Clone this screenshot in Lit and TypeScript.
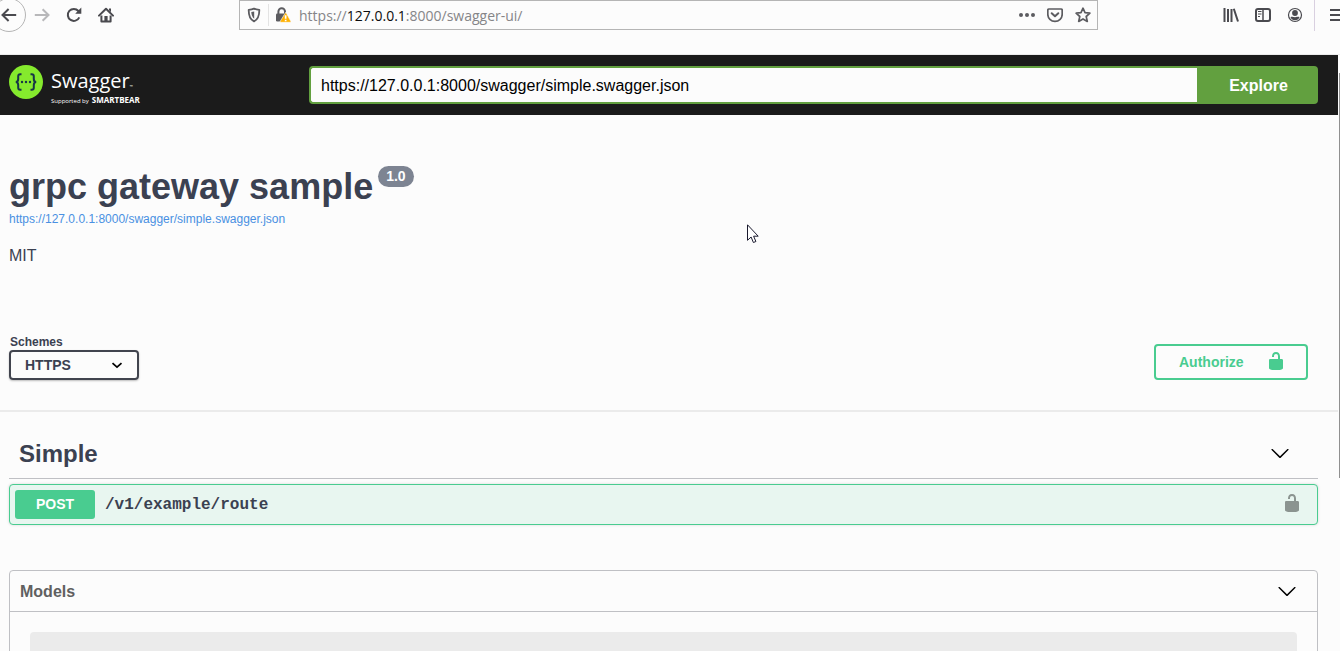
import { LitElement, html, css, svg } from "lit";
import { customElement, state } from "lit/decorators.js";

const chevron = html`<svg class="chevron" viewBox="0 0 20 20" width="20" height="20" aria-hidden="true">
  <path d="M17.418 5.109c.272-.268.709-.268.979 0s.271.701 0 .969l-7.908 7.830c-.27.268-.707.268-.979 0l-7.908-7.830c-.27-.268-.27-.701 0-.969.271-.268.709-.268.979 0L10 12.250l7.418-7.141z" />
</svg>`;

const unlocked = html`<svg class="lock" viewBox="0 0 20 20" width="20" height="20" aria-hidden="true">
  <path d="M15.8 8H14V5.6C14 2.703 12.665 1 10 1 7.334 1 6 2.703 6 5.6V6h2v-.801C8 3.754 8.797 3 10 3c1.203 0 2 .754 2 2.199V8H4c-.553 0-1 .646-1 1.199V17c0 .549.428 1.139.951 1.307l1.197.387C5.672 18.861 6.55 19 7.1 19h5.8c.549 0 1.428-.139 1.951-.307l1.196-.387c.524-.167.953-.757.953-1.306V9.199C17 8.646 16.352 8 15.8 8z" />
</svg>`;

const icon = (body: unknown) =>
  html`<svg viewBox="0 0 16 16" width="16" height="16" aria-hidden="true">${body}</svg>`;

const icons = {
  back: svg`<path d="M15.2 8H1.6M7.6 2L1.5 8l6.1 6" class="line" />`,
  forward: svg`<path d="M.8 8h13.6M8.6 2.2L14.5 8l-5.9 5.8" class="line" />`,
  reload: svg`<path d="M13.3 10.4a6 6 0 1 1-.9-6.4l1 1.4" class="line" /><path d="M15.3.6v6.2H9.2z" />`,
  home: svg`<path d="M1 8.6L8 1.8l7 6.8" class="line" stroke-linecap="round" stroke-linejoin="round" /><path d="M3.4 8.4v6h9.2v-6" class="line" stroke-linejoin="round" /><path d="M6.4 14V9h3.2v5zM11 1.6h2v3.6l-2-2z" />`,
  shield: svg`<path d="M8 1.6c2 1 3.6 1.1 5.3 1.2C13.4 8.6 12 12.6 8 14.4 4 12.6 2.6 8.6 2.7 2.8 4.4 2.7 6 2.6 8 1.6z" fill="none" stroke="currentColor" stroke-width="1.8" stroke-linejoin="round" /><path d="M8.2 4.4v7.3C6.2 10.3 5.4 8 5.3 5.1z" />`,
  lockWarning: svg`<path d="M3.4 7V4.500a3.300 3.300 0 0 1 6.600 0V7" fill="none" stroke="currentColor" stroke-width="2" /><rect x="1" y="6.500" width="11" height="8" rx="1.300" /><path d="M10.800 5.200l5 9.100a.7.7 0 0 1-.6 1H5.800a.7.7 0 0 1-.6-1z" fill="#ffb100" stroke="#fcfcfc" stroke-width=".6" /><path d="M9.800 8.200h1.700v3.600H9.800zm0 4.500h1.700v1.500H9.800z" fill="#fff" />`,
  dots: svg`<circle cx="2" cy="8" r="2" /><circle cx="8" cy="8" r="2" /><circle cx="14" cy="8" r="2" />`,
  pocket: svg`<path d="M2 2h12a1.2 1.2 0 0 1 1.2 1.2V7.2a7.2 7.2 0 0 1-14.4 0V3.2A1.2 1.2 0 0 1 2 2z" fill="none" stroke="currentColor" stroke-width="1.7" /><path d="M4.7 6.2L8 9.3l3.3-3.1" class="line" stroke-linecap="round" stroke-linejoin="round" />`,
  star: svg`<path d="M8 1.2l2 4.500 4.900.5-3.700 3.300 1.100 4.900L8 11.900l-4.300 2.500 1.100-4.900L1.100 6.200 6 5.700z" fill="none" stroke="currentColor" stroke-width="1.7" stroke-linejoin="round" />`,
  library: svg`<path d="M1.5 1v14M5 2v13M8.5 2v13M10.8 1.8L15 14.5" class="line" />`,
  sidebar: svg`<rect x="1" y="2" width="14" height="12" rx="2" class="line" /><path d="M8 2v12" fill="none" stroke="currentColor" stroke-width="1.5" /><path d="M3 4.5h3.5M3 7h3.5M3 9.5h2" fill="none" stroke="currentColor" />`,
  account: svg`<circle cx="8" cy="8" r="6.5" fill="none" stroke="currentColor" stroke-width="1.2" /><circle cx="8" cy="6" r="2.9" /><path d="M3.5 10.2c1.200-.8 2.200 0 4.500 0s3.300-.8 4.500 0c-.7 1.900-2.300 3-4.500 3s-3.800-1.100-4.500-3z" />`,
  menu: svg`<path d="M1 3h14M1 8h14M1 13h14" class="line" />`,
};

@customElement("browser-toolbar")
class BrowserToolbar extends LitElement {
  static styles = css`
    :host { display: block; height: 54px; border-bottom: 1px solid #ebebeb; color: #4a4a4f; overflow: hidden; }
    .row { display: flex; height: 30px; }
    svg { display: block; fill: currentColor; flex: none; }
    .line { fill: none; stroke: currentColor; stroke-width: 2; }
    button { display: grid; place-items: center; padding: 0; border: 0; background: none; color: inherit; }
    .nav { flex: none; display: flex; align-items: center; gap: 16px; width: 239px; }
    .back { flex: none; box-sizing: border-box; width: 34px; height: 34px; margin: 0 -8px; border: 1px solid #b5b5b5; border-radius: 50%; }
    .forward { color: #b8b8ba; }
    .address { flex: 1; display: flex; align-items: center; box-sizing: border-box; border: 1px solid #b5b5b5; padding: 0 6px; color: #5c5c60; }
    .security { display: flex; align-items: center; gap: 6px; }
    .security .split { width: 1px; height: 22px; background: #e3e3e3; }
    .url { flex: 1; padding: 2px 0 0 8px; font: 14px/20px "Open Sans", sans-serif; color: #858588; white-space: nowrap; }
    .url b { font-weight: 400; color: #0c0c0d; }
    .actions { display: flex; gap: 12px; }
    .tools { flex: none; display: flex; align-items: center; gap: 16px; width: 242px; box-sizing: border-box; padding-left: 125px; }
    .menu { flex: none; height: 32px; padding-left: 14px; margin-left: -5px; border-left: 1px solid #d9d0e0; }
  `;

  render() {
    return html`<div class="row">
      <nav class="nav" aria-label="Navigation">
        <button class="back" aria-label="Back">${icon(icons.back)}</button>
        <button class="forward" aria-label="Forward">${icon(icons.forward)}</button>
        <button aria-label="Reload">${icon(icons.reload)}</button>
        <button aria-label="Home">${icon(icons.home)}</button>
      </nav>
      <div class="address">
        <div class="security">${icon(icons.shield)}<span class="split"></span>${icon(icons.lockWarning)}</div>
        <span class="url">https://<b>127.0.0.1</b>:8000/swagger-ui/</span>
        <div class="actions">
          <button aria-label="Page actions">${icon(icons.dots)}</button>
          <button aria-label="Save to Pocket">${icon(icons.pocket)}</button>
          <button aria-label="Bookmark">${icon(icons.star)}</button>
        </div>
      </div>
      <div class="tools">
        <button aria-label="Library">${icon(icons.library)}</button>
        <button aria-label="Sidebars">${icon(icons.sidebar)}</button>
        <button aria-label="Account">${icon(icons.account)}</button>
        <button class="menu" aria-label="Menu">${icon(icons.menu)}</button>
      </div>
    </div>`;
  }
}

@customElement("swagger-topbar")
class SwaggerTopbar extends LitElement {
  static styles = css`
    :host { display: flex; align-items: center; height: 60px; box-sizing: border-box; padding: 0 20px 0 9px; background: #1b1b1b; }
    .logo { flex: none; display: flex; gap: 8px; width: 300px; height: 40px; color: #fff; text-decoration: none; font-family: "Open Sans", sans-serif; }
    .words { display: flex; flex-direction: column; }
    .name { height: 31px; font-size: 20px; line-height: 32px; font-weight: 400; }
    .name small { font-size: 4px; }
    .by { display: flex; align-items: baseline; gap: 3px; font-size: 6px; line-height: 8px; }
    .by b { font-size: 8px; font-weight: 700; }
    form { flex: 1; display: flex; height: 38px; }
    input { flex: 1; min-width: 0; box-sizing: border-box; margin: 0; padding: 2px 10px 0; border: 2px solid #62a03f; border-right: 0; border-radius: 4px 0 0 4px; background: #fcfcfc; color: #000; font: 16px "Liberation Sans", Arial, sans-serif; outline: none; }
    button { width: 121px; padding: 2px 0 0 2px; border: 0; border-radius: 0 4px 4px 0; background: #62a03f; color: #fff; font: bold 16px "Liberation Sans", Arial, sans-serif; }
  `;

  render() {
    return html`
      <a class="logo" href="#">
        <svg viewBox="0 0 34 34" width="34" height="34" aria-hidden="true">
          <circle cx="17" cy="17" r="17" fill="#85ea2d" />
          <g fill="none" stroke="#173647" stroke-width="2">
            <path d="M12.5 9.3h-1.300c-1.300 0-2 .7-2 2v2.600c0 1.900-.7 3-2.400 3.100 1.700.1 2.400 1.200 2.400 3.100v2.600c0 1.300.7 2 2 2h1.300" />
            <path d="M21.5 9.3h1.300c1.300 0 2 .7 2 2v2.600c0 1.900.7 3 2.400 3.100-1.700.1-2.400 1.200-2.400 3.100v2.600c0 1.300-.7 2-2 2h-1.300" />
          </g>
          <g fill="#173647"><circle cx="13" cy="17" r="1.2" /><circle cx="17" cy="17" r="1.2" /><circle cx="21" cy="17" r="1.2" /></g>
        </svg>
        <span class="words">
          <span class="name">Swagger<small>™</small></span>
          <span class="by">Supported by <b>SMARTBEAR</b></span>
        </span>
      </a>
      <form @submit=${(e: Event) => e.preventDefault()}>
        <input type="text" aria-label="Specification URL" .value=${"https://127.0.0.1:8000/swagger/simple.swagger.json"} />
        <button type="submit">Explore</button>
      </form>
    `;
  }
}

@customElement("app-root")
class AppRoot extends LitElement {
  @state() private modelsOpen = true;

  static styles = css`
    :host { display: flex; flex-direction: column; height: 100vh; overflow: hidden; position: relative; background: #fcfcfc; color: #3b4151; font-family: "Liberation Sans", Arial, sans-serif; }
    browser-toolbar { flex: none; }
    .viewport { flex: 1; display: flex; min-height: 0; }
    .page { flex: 1; min-width: 0; overflow: hidden; }
    .rail { flex: none; box-sizing: border-box; width: 2px; padding: 18px 0 0 1px; }
    .thumb { height: 70%; background: #909090; }
    .wrap { padding: 0 20px 0 9px; }
    .info { padding-top: 51px; }
    h1 { display: flex; align-items: flex-start; gap: 5px; margin: 0; font-size: 36px; line-height: 42px; }
    .version { padding: 0 8px; border-radius: 12px; background: #7d8492; color: #fff; font-size: 14px; line-height: 21px; }
    .spec { display: block; width: max-content; margin-top: 3px; color: #4990e2; font-size: 12px; line-height: 16px; text-decoration: none; }
    .license { margin: 19px 0 0; font-size: 16px; line-height: 20px; }
    .schemes { display: flex; justify-content: space-between; align-items: flex-end; margin-top: 68px; padding: 0 30px 30px 9px; border-bottom: 2px solid #ebebeb; }
    .schemes label { display: block; padding-left: 1px; font-size: 12px; line-height: 16px; font-weight: bold; }
    .select { display: grid; width: 130px; height: 30px; }
    .select > * { grid-area: 1 / 1; }
    select { appearance: none; margin: 0; padding: 0 14px; border: 2px solid #41444e; border-radius: 4px; background: transparent; box-shadow: 0 1px 2px rgba(0, 0, 0, 0.25); color: #3b4151; font: bold 14px "Liberation Sans", Arial, sans-serif; }
    .select svg { place-self: center end; margin-right: 12px; pointer-events: none; }
    .authorize { display: flex; align-items: center; justify-content: space-between; box-sizing: border-box; width: 154px; height: 36px; padding: 0 20px 0 23px; border: 2px solid #49cc90; border-radius: 4px; background: none; color: #49cc90; font: bold 14px "Liberation Sans", Arial, sans-serif; }
    .lock { display: block; fill: currentColor; }
    .chevron { display: block; fill: #000; }
    .authorize .lock { margin-bottom: 2px; }
    .tag { display: flex; align-items: center; justify-content: space-between; height: 24px; margin-top: 30px; padding: 0 28px 12px 10px; border-bottom: 1px solid #bfc0c4; }
    h2 { margin: 0; font-size: 24px; line-height: 26px; }
    .operation { display: flex; align-items: center; box-sizing: border-box; width: 100%; height: 41px; margin-top: 5px; padding: 0 15px 0 5px; border: 1px solid #49cc90; border-radius: 4px; background: #e8f6f0; box-shadow: 0 0 3px rgba(0, 0, 0, 0.15); color: #3b4151; text-align: left; }
    .method { width: 80px; border-radius: 3px; background: #49cc90; color: #fff; font: bold 14px/29px "Liberation Sans", Arial, sans-serif; text-align: center; }
    .path { flex: 1; padding-left: 10px; font: bold 16px "Courier New", "Liberation Mono", monospace; }
    .operation .lock { margin-bottom: 4px; color: #8b9490; }
    .models { margin-top: 45px; border: 1px solid #bfc0c4; border-radius: 4px; }
    .models h3 { margin: 0; }
    .toggle { display: flex; align-items: center; justify-content: space-between; width: 100%; height: 40px; padding: 2px 20px 0 10px; border: 0; background: none; color: #606060; font: bold 16px "Liberation Sans", Arial, sans-serif; }
    .model-list { padding: 20px; border-top: 1px solid #bfc0c4; }
    .model { height: 40px; border-radius: 4px; background: #ebebeb; }
    .pointer { position: absolute; left: 747px; top: 224px; pointer-events: none; }
  `;

  render() {
    return html`
      <browser-toolbar></browser-toolbar>
      <div class="viewport">
        <main class="page">
          <swagger-topbar></swagger-topbar>
          <section class="wrap info">
            <h1>grpc gateway sample<span class="version">1.0</span></h1>
            <a class="spec" href="#">https://127.0.0.1:8000/swagger/simple.swagger.json</a>
            <p class="license">MIT</p>
          </section>
          <section class="schemes">
            <div>
              <label for="scheme">Schemes</label>
              <div class="select">
                <select id="scheme"><option>HTTPS</option></select>
                <svg viewBox="0 0 20 20" width="20" height="20" aria-hidden="true">
                  <path d="M5.5 8.2L10 12.2l4.5-4" fill="none" stroke="#000" stroke-width="1.7" />
                </svg>
              </div>
            </div>
            <button class="authorize">Authorize ${unlocked}</button>
          </section>
          <div class="wrap">
            <section>
              <div class="tag"><h2>Simple</h2>${chevron}</div>
              <button class="operation">
                <span class="method">POST</span>
                <span class="path">/v1/example/route</span>
                ${unlocked}
              </button>
            </section>
            <section class="models">
              <h3>
                <button class="toggle" aria-expanded=${this.modelsOpen} @click=${() => (this.modelsOpen = !this.modelsOpen)}>
                  Models ${chevron}
                </button>
              </h3>
              ${this.modelsOpen ? html`<div class="model-list"><div class="model"></div></div>` : null}
            </section>
          </div>
        </main>
        <div class="rail"><div class="thumb"></div></div>
      </div>
      <svg class="pointer" viewBox="0 0 12 20" width="12" height="20" aria-hidden="true">
        <path d="M.5.8v15.5l3.6-3.300 2.300 5.500 2.500-1-2.300-5.300h4.600z" fill="#fff" stroke="#1a1a2e" />
      </svg>
    `;
  }
}
